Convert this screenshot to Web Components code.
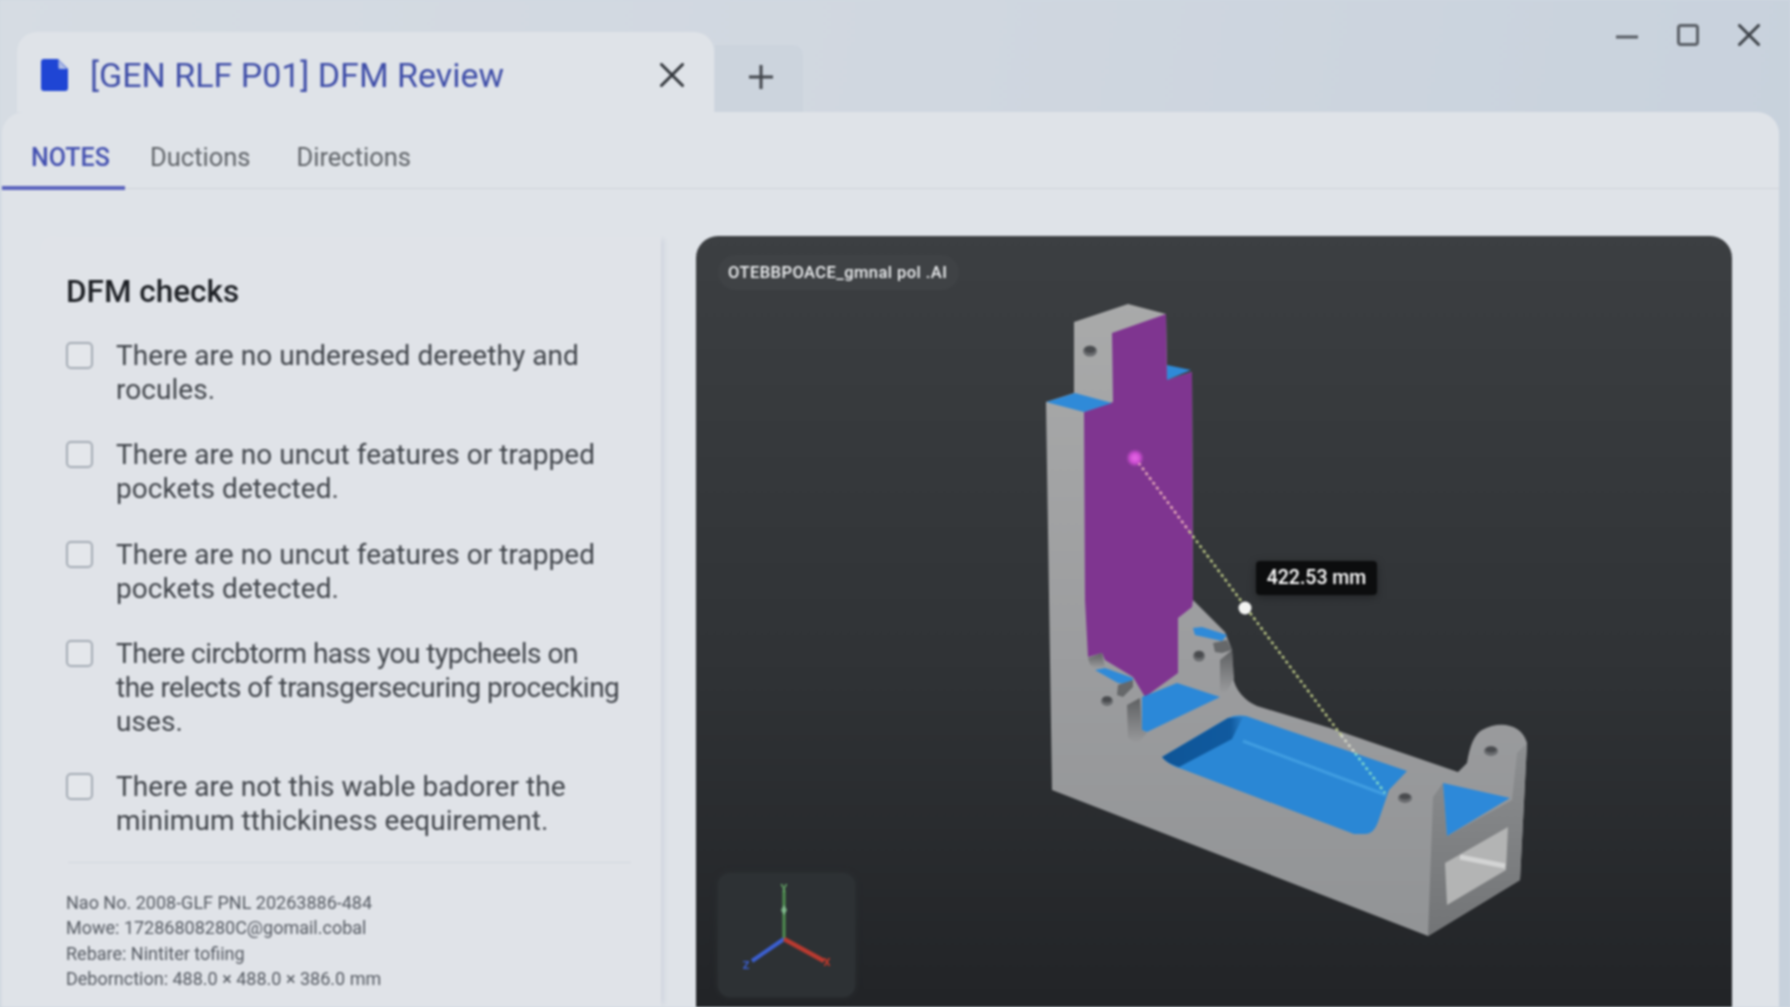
<!DOCTYPE html>
<html lang="en">
<head>
<meta charset="utf-8">
<title>DFM Review</title>
<style>
  html, body { margin: 0; height: 100%; overflow: hidden; background: #cfd7e0; }
  body { font-family: Roboto, "Liberation Sans", sans-serif; }
  .tight { letter-spacing: -.5px; }
</style>
</head>
<body>
<app-window>
  <title-bar slot="top" title-text="[GEN RLF P01] DFM Review"></title-bar>
  <review-pane slot="pane">
    <tab-strip></tab-strip>
    <check-panel>
      <check-item>There are no underesed dereethy and<br>rocules.</check-item>
      <check-item>There are no uncut features or trapped<br>pockets detected.</check-item>
      <check-item>There are no uncut features or trapped<br>pockets detected.</check-item>
      <check-item><span class="tight">There circbtorm hass you typcheels on<br>the relects of transgersecuring procecking</span><br>uses.</check-item>
      <check-item>There are not this wable badorer the<br>minimum tthickiness eequirement.</check-item>
    </check-panel>
    <model-viewer></model-viewer>
  </review-pane>
</app-window>

<script>
class AppWindow extends HTMLElement {
  connectedCallback() {
    this.attachShadow({ mode: 'open' });
    this.shadowRoot.innerHTML = `
      <style>
        :host {
          display: flex;
          flex-direction: column;
          width: 1790px;
          height: 1007px;
          overflow: hidden;
          background: linear-gradient(100deg, #d6dce3 0%, #d0d7e0 50%, #c7d1dc 100%);
          filter: blur(0.8px);
        }
        .pane { flex: 1; min-height: 0; display: flex; }
      </style>
      <slot name="top"></slot>
      <div class="pane"><slot name="pane"></slot></div>
    `;
  }
}
customElements.define('app-window', AppWindow);

class TitleBar extends HTMLElement {
  connectedCallback() {
    this.attachShadow({ mode: 'open' });
    this.shadowRoot.innerHTML = `
      <style>
        :host {
          display: flex;
          align-items: flex-end;
          height: 112px;
          padding-left: 17px;
          padding-right: 30px;
          flex: none;
        }
        .tab {
          width: 697px;
          height: 80px;
          box-sizing: border-box;
          background: #dfe3e8;
          border-radius: 20px 20px 0 0;
          display: flex;
          align-items: center;
          padding: 6px 30px 0 24px;
          gap: 22px;
        }
        .tab .name {
          flex: 1;
          font-size: 34px;
          color: #3f4ea8;
          white-space: nowrap;
        }
        .plus {
          width: 88px;
          height: 67px;
          margin-left: 1px;
          background: #ccd4dd;
          border-radius: 0 10px 0 0;
          display: flex;
          align-items: center;
          justify-content: center;
          padding: 0 0 3px 3px;
          box-sizing: border-box;
        }
        .controls {
          margin-left: auto;
          align-self: flex-start;
          margin-top: 24px;
          display: flex;
          gap: 39px;
        }
        svg { display: block; }
      </style>
      <div class="tab">
        <svg width="27" height="32" viewBox="0 0 27 32"><path d="M3 0h14l10 10v19a3 3 0 0 1-3 3H3a3 3 0 0 1-3-3V3a3 3 0 0 1 3-3z" fill="#1f45d4"/><path d="M17.5 1v7.5a1.5 1.5 0 0 0 1.5 1.5h7z" fill="#dfe3e8" opacity=".75"/></svg>
        <span class="name">${this.getAttribute('title-text')}</span>
        <svg width="24" height="24" viewBox="0 0 24 24"><path d="M1.5 1.5l21 21M22.5 1.5l-21 21" stroke="#33373c" stroke-width="3" stroke-linecap="round"/></svg>
      </div>
      <div class="plus">
        <svg width="26" height="26" viewBox="0 0 26 26"><path d="M13 1v24M1 13h24" stroke="#43474d" stroke-width="3"/></svg>
      </div>
      <div class="controls">
        <svg width="22" height="22" viewBox="0 0 22 22"><path d="M0 13h22" stroke="#565b62" stroke-width="3"/></svg>
        <svg width="22" height="22" viewBox="0 0 22 22"><rect x="1.5" y="1.5" width="19" height="19" rx="2.5" fill="none" stroke="#5a5f66" stroke-width="3"/></svg>
        <svg width="22" height="22" viewBox="0 0 22 22"><path d="M1.5 1.5l19 19M20.5 1.5l-19 19" stroke="#3d4248" stroke-width="3" stroke-linecap="round"/></svg>
      </div>
    `;
  }
}
customElements.define('title-bar', TitleBar);

class ReviewPane extends HTMLElement {
  connectedCallback() {
    this.attachShadow({ mode: 'open' });
    this.shadowRoot.innerHTML = `
      <style>
        :host {
          display: grid;
          flex: 1;
          grid-template-columns: 659px 1fr;
          grid-template-rows: 77px 1fr;
          column-gap: 35px;
          margin: 0 11px 0 2px;
          padding: 0 47px 0 0;
          background: #dfe3e8;
          border-radius: 22px 22px 0 0;
          box-sizing: border-box;
          min-height: 0;
        }
        ::slotted(tab-strip) { grid-column: 1 / 3; margin-right: -47px; }
        ::slotted(check-panel) { margin: 47px 0 0 38px; }
        ::slotted(model-viewer) { margin-top: 47px; }
      </style>
      <slot></slot>
    `;
  }
}
customElements.define('review-pane', ReviewPane);

class TabStrip extends HTMLElement {
  connectedCallback() {
    this.attachShadow({ mode: 'open' });
    this.shadowRoot.innerHTML = `
      <style>
        :host {
          display: flex;
          align-items: stretch;
          border-bottom: 1.5px solid #ced2d8;
          box-sizing: border-box;
          font-size: 25.5px;
          color: #5f6368;
        }
        .t { display: flex; align-items: center; padding-top: 14px; box-sizing: border-box; white-space: nowrap; }
        .on {
          color: #4350b0;
          font-weight: 500;
          font-size: 25px;
          padding-left: 29px;
          width: 123px;
          margin-bottom: -1.5px;
          border-bottom: 4px solid #5b63bd;
          padding-top: 18px;
        }
        .d { margin-left: 25px; }
        .e { margin-left: 46px; }
      </style>
      <div class="t on">NOTES</div>
      <div class="t d">Ductions</div>
      <div class="t e">Directions</div>
    `;
  }
}
customElements.define('tab-strip', TabStrip);

class CheckPanel extends HTMLElement {
  connectedCallback() {
    this.attachShadow({ mode: 'open' });
    this.shadowRoot.innerHTML = `
      <style>
        :host {
          display: block;
          background: #e0e3e8;
          box-shadow: 6px 0 4px -3px rgba(160,170,195,.22);
          padding: 39px 30px 0 26px;
          box-sizing: border-box;
          border-radius: 14px 0 0 0;
          min-width: 0;
        }
        h2 {
          margin: 0 0 30px;
          font-size: 31.5px;
          line-height: 34px;
          font-weight: 500;
          color: #1e2126;
          white-space: nowrap;
        }
        .list { display: flex; flex-direction: column; gap: 32px; }
        hr {
          border: 0;
          border-top: 1.5px solid #d2d7de;
          margin: 24px 0 27px 2px;
        }
        .meta { font-size: 18px; line-height: 25.5px; color: #565b63; white-space: nowrap; }
      </style>
      <h2>DFM checks</h2>
      <div class="list"><slot></slot></div>
      <hr>
      <div class="meta">
        Nao No. 2008-GLF PNL 20263886-484<br>
        Mowe: 17286808280C@gomail.cobal<br>
        Rebare: Nintiter tofiing<br>
        Debornction: 488.0 × 488.0 × 386.0 mm
      </div>
    `;
  }
}
customElements.define('check-panel', CheckPanel);

class CheckItem extends HTMLElement {
  connectedCallback() {
    this.attachShadow({ mode: 'open' });
    this.shadowRoot.innerHTML = `
      <style>
        :host {
          display: flex;
          gap: 23px;
          font-size: 28px;
          line-height: 33.7px;
          letter-spacing: .05px;
          color: #41454b;
          white-space: nowrap;
        }
        .box {
          flex: none;
          width: 27px;
          height: 27px;
          margin: 3px 0 0 0;
          box-sizing: border-box;
          border: 2px solid #a4abb4;
          border-radius: 5px;
          background: #e4e7eb;
        }
      </style>
      <span class="box"></span>
      <span><slot></slot></span>
    `;
  }
}
customElements.define('check-item', CheckItem);

class ModelViewer extends HTMLElement {
  connectedCallback() {
    this.attachShadow({ mode: 'open' });
    this.shadowRoot.innerHTML = `
      <style>
        :host {
          display: block;
          position: relative;
          overflow: hidden;
          border-radius: 22px 22px 0 0;
          background: linear-gradient(180deg, #3c3f42 0%, #303336 55%, #222427 100%);
        }
        svg.scene { position: absolute; left: 0; top: 0; width: 1036px; height: 771px; }
        .file {
          position: absolute;
          left: 22px;
          top: 19px;
          height: 35px;
          padding: 0 12px 0 10px;
          display: flex;
          align-items: center;
          border-radius: 18px;
          background: #3f4245;
          color: #eceef0;
          font-size: 16.5px;
          letter-spacing: .45px;
          font-weight: 500;
          white-space: nowrap;
        }
        .tip {
          position: absolute;
          left: 560px;
          top: 324.5px;
          width: 121px;
          height: 34px;
          display: flex;
          align-items: center;
          justify-content: center;
          background: #0c0d0e;
          border-radius: 4px;
          color: #fff;
          font-size: 19.5px;
          font-weight: 500;
          box-shadow: 0 2px 8px rgba(0,0,0,.35);
          white-space: nowrap;
        }
        .gizmo {
          position: absolute;
          left: 22px;
          top: 637px;
          width: 137px;
          height: 124px;
          border-radius: 12px;
          background: #2d3134;
          box-shadow: 0 0 6px #2d3134;
        }
        .gizmo svg { display: block; }
      </style>
      <svg class="scene" viewBox="696 236 1036 771">
        <defs>
          <linearGradient id="gray" x1="0" y1="0" x2="0" y2="1">
            <stop offset="0" stop-color="#a9aaaa"/>
            <stop offset=".55" stop-color="#9c9d9f"/>
            <stop offset="1" stop-color="#929496"/>
          </linearGradient>
          <linearGradient id="notch" x1="0" y1="0" x2="0" y2="1">
            <stop offset="0" stop-color="#5e6062"/>
            <stop offset="1" stop-color="#9a9b9d"/>
          </linearGradient>
          <linearGradient id="end" x1="0" y1="0" x2="0" y2="1">
            <stop offset="0" stop-color="#8d8f91"/>
            <stop offset="1" stop-color="#727476"/>
          </linearGradient>
          <linearGradient id="wall" x1="0" y1="0" x2="1" y2="0">
            <stop offset="0" stop-color="#0f5597"/>
            <stop offset=".85" stop-color="#105a9f"/>
            <stop offset="1" stop-color="#2a7fc8"/>
          </linearGradient>
          <radialGradient id="glow">
            <stop offset="0" stop-color="#e66be6"/>
            <stop offset=".5" stop-color="#d24fd6"/>
            <stop offset="1" stop-color="#d24fd6" stop-opacity="0"/>
          </radialGradient>
        </defs>
        <!-- body -->
        <path fill="url(#gray)" d="M1046 402L1074 393L1074 322L1128 304L1166 314L1167 380L1192 372L1193 600L1225 632L1232 650L1233 677C1235 690 1245 701 1257 706L1330 728L1458 772L1467 763C1470 745 1474 735 1482 730C1500 720 1522 724 1527 743L1520 880L1428 936L1052 790Z"/>
        <!-- purple face -->
        <path fill="#7f3590" d="M1112 333L1166 314L1167 380L1192 372L1193 600L1192 607L1178 618L1178 673L1145 697L1133 677L1105 660L1102 653L1088 657L1085 600L1084 412L1113 402Z"/>
        <!-- blue ledges -->
        <path fill="#2f8ad8" d="M1046 402L1075 393L1112 403L1084 412Z"/>
        <path fill="#2f8ad8" d="M1167 365L1191 370L1167 380Z"/>
        <path fill="#2f8ad8" d="M1095 670L1105 668L1133 678L1132 685L1118 683Z"/>
        <path fill="#2f8ad8" d="M1193 628L1202 627L1227 635L1222 641L1195 635Z"/>
        <path fill="#2b88d8" d="M1142 697L1177 683L1220 697L1147 732L1142 730Z"/>
        <!-- notches -->
        <path fill="url(#notch)" d="M1220 660L1232 650L1234 678L1227 692L1220 693Z"/>
        <path fill="url(#notch)" d="M1127 705L1140 698L1142 730L1147 733L1137 744L1128 738Z"/>
        <path fill="url(#notch)" d="M1088 658L1102 653L1105 667L1095 668L1090 665Z"/>
        <path fill="#66686a" d="M1118 685L1133 680L1133 687L1123 697L1117 695Z"/>
        <path fill="#66686a" d="M1213 643L1227 640L1232 650L1222 653L1215 652Z"/>
        <!-- pocket -->
        <path fill="#2a87d5" d="M1162 757L1228 718C1234 715 1241 715 1246 716L1407 771L1389 790L1378 822C1375 830 1371 834 1365 834L1354 834L1182 769C1172 766 1166 762 1162 757Z"/>
        <path fill="url(#wall)" d="M1162 757L1228 718L1243 717L1232 739L1179 767C1172 765 1166 762 1162 757Z"/>
        <path d="M1243 741L1386 795" stroke="#4aa6e6" stroke-width="3" fill="none" opacity=".7"/>
        <!-- end frame -->
        <path fill="url(#end)" d="M1433 797L1443 783L1447 836L1512 800L1517 753L1527 743L1520 880L1428 936Z"/>
        <path fill="#2d89d9" d="M1443 783L1510 798L1447 836Z"/>
        <path fill="#b3b4b4" d="M1445 863L1508 827L1506 870L1447 905Z"/>
        <path d="M1460 857L1505 866" stroke="#dcdddd" stroke-width="5" opacity=".8"/>
        <!-- holes -->
        <g fill="#6a6c6f">
          <ellipse cx="1090" cy="351" rx="7" ry="5.5"/>
          <ellipse cx="1107" cy="701" rx="6" ry="5"/>
          <ellipse cx="1199" cy="656" rx="6" ry="5.5"/>
          <ellipse cx="1405" cy="798" rx="7" ry="5"/>
          <ellipse cx="1491" cy="751" rx="7" ry="5"/>
        </g>
        <g fill="#494b4e">
          <ellipse cx="1090" cy="349.5" rx="5.5" ry="3.5"/>
          <ellipse cx="1107" cy="699.5" rx="4.5" ry="3"/>
          <ellipse cx="1199" cy="654.5" rx="4.5" ry="3.5"/>
          <ellipse cx="1405" cy="796.5" rx="5.5" ry="3"/>
          <ellipse cx="1491" cy="749.5" rx="5.5" ry="3"/>
        </g>
        <!-- measure line -->
        <g stroke-width="2.5" stroke-dasharray="3 3" fill="none">
          <path d="M1135 458L1189 531" stroke="#eab0ba"/>
          <path d="M1189 531L1341 735" stroke="#c0cd88"/>
          <path d="M1341 735L1355 753" stroke="#d8dbcc"/>
          <path d="M1355 753L1385 793" stroke="#84dccb"/>
        </g>
        <circle cx="1135" cy="458" r="9" fill="url(#glow)"/>
        <circle cx="1245" cy="608" r="6.5" fill="#f3f4f2"/>
      </svg>
      <div class="file">OTEBBPOACE_gmnal pol .AI</div>
      <div class="tip">422.53 mm</div>
      <div class="gizmo">
        <svg width="137" height="124" viewBox="718 873 137 124">
          <path d="M784 939V890" stroke="#4f8f50" stroke-width="3"/>
          <path d="M784 939L752 961" stroke="#3b5fd0" stroke-width="4"/>
          <path d="M784 939L824 961" stroke="#b93a30" stroke-width="4.5"/>
          <path d="M784 905l-3 5 3 5 3-5z" fill="#7fb98a"/>
          <text x="784" y="892" font-size="11" font-weight="700" fill="#66a868" text-anchor="middle" font-family="Roboto">Y</text>
          <text x="746" y="969" font-size="11" font-weight="700" fill="#3b5fd0" text-anchor="middle" font-family="Roboto">Z</text>
          <text x="827" y="966" font-size="11" font-weight="700" fill="#c0392b" text-anchor="middle" font-family="Roboto">X</text>
        </svg>
      </div>
    `;
  }
}
customElements.define('model-viewer', ModelViewer);
</script>
</body>
</html>
